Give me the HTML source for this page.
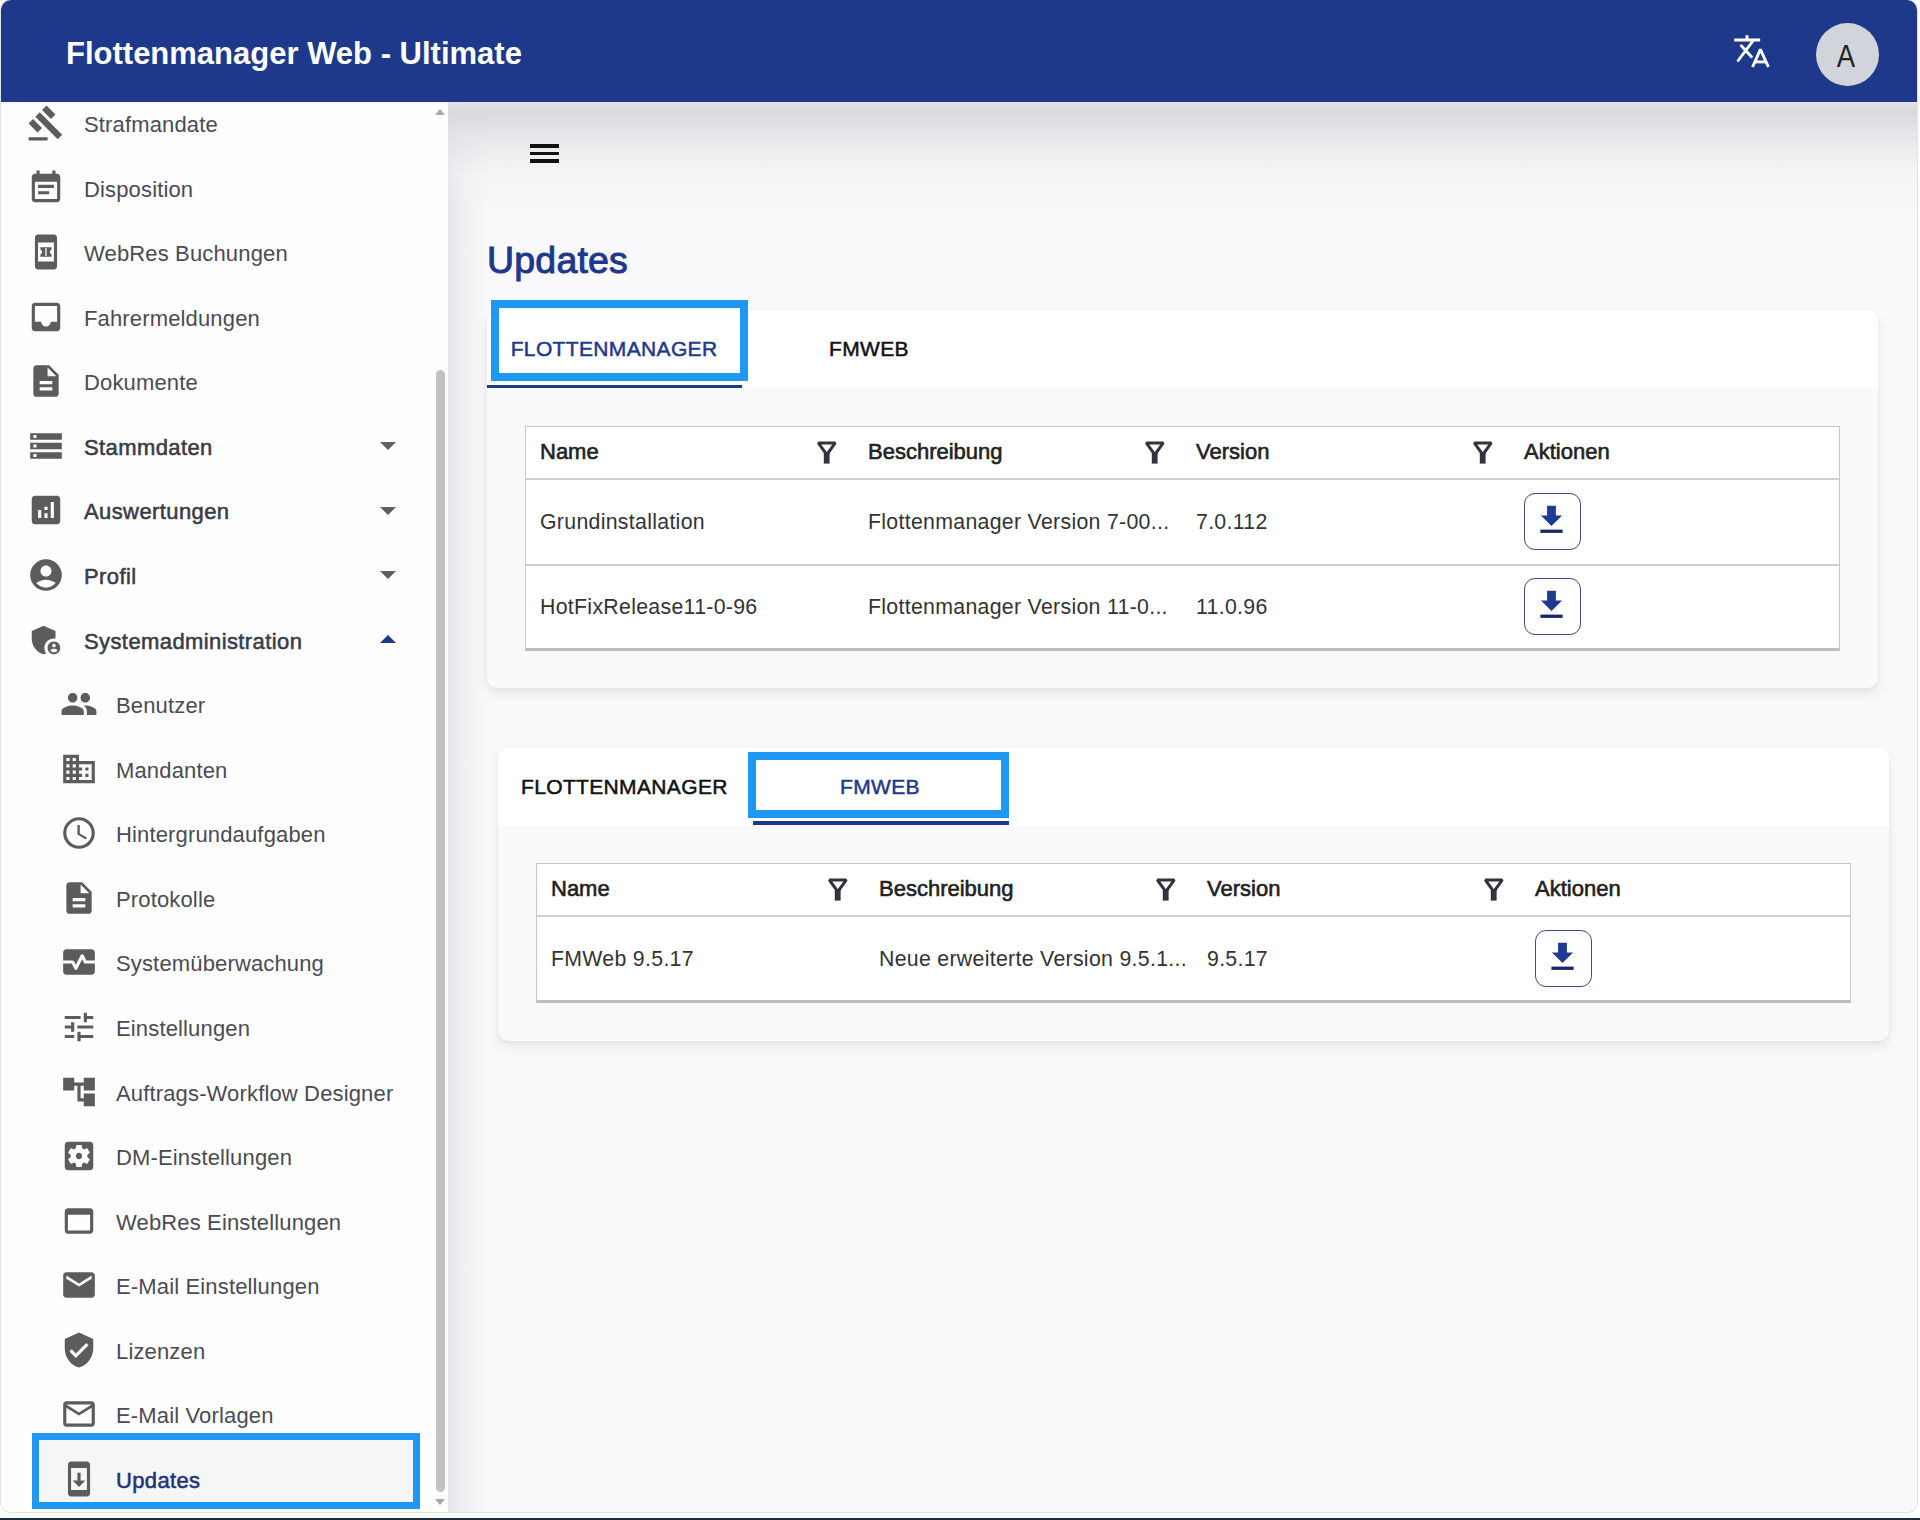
<!DOCTYPE html>
<html><head><meta charset="utf-8">
<style>
*{box-sizing:border-box;margin:0;padding:0}
html,body{width:1920px;height:1520px;overflow:hidden}
body{position:relative;background:#ffffff;font-family:"Liberation Sans",sans-serif}
#bot{position:absolute;left:0;top:1518px;width:1920px;height:2px;background:#1b2c3e}
#win{position:absolute;left:1px;top:0;width:1916px;height:1512px;border-radius:10px;background:#f9f9fb;overflow:hidden;box-shadow:0 0 0 1px #e2e2e2}
#hdr{position:absolute;left:1px;top:0;width:1916px;height:102px;background:#1e398b;border-radius:10px 10px 0 0}
#title{position:absolute;left:65px;top:34px;font-size:31px;font-weight:700;color:#fff;line-height:40px;white-space:nowrap}
#avatar{position:absolute;left:1814.5px;top:22.7px;width:63.5px;height:63.5px;border-radius:50%;background:#d1d4da;color:#222;font-size:32px;text-align:center;line-height:66px;text-indent:-2px}
#avatar span{display:inline-block;transform:scaleX(0.86)}

#side{position:absolute;left:1px;top:102px;width:447px;height:1410px;background:#fefefe;border-bottom-left-radius:10px;overflow:hidden}
#sideinner{position:absolute;left:-1px;top:-102px;width:447px;height:1520px}
.ic{position:absolute;width:38.0px;height:38.0px;fill:#5c5c5c}
.lb{position:absolute;height:40px;line-height:40px;font-size:22px;letter-spacing:0.15px;color:#4b4b53;white-space:nowrap}
.lb.b{color:#3b3b46;letter-spacing:0.4px;-webkit-text-stroke:0.55px currentColor}
.lb.sel{color:#24337c;letter-spacing:0.35px;-webkit-text-stroke:0.55px currentColor}
.caret{position:absolute;left:379.5px;width:0;height:0;border-left:8px solid transparent;border-right:8px solid transparent}
#selbg{position:absolute;left:39px;top:1440px;width:374px;height:62px;background:#f6f6f7}
.hib{position:absolute;border:8px solid #1e98f2}
#sb{position:absolute;left:435.8px;top:370px;width:9.4px;height:1122px;border-radius:5px;background:#c2c2c2}
.sbar{position:absolute;left:435px;width:0;height:0;border-left:5.5px solid transparent;border-right:5.5px solid transparent}
#main{position:absolute;left:448px;top:102px;width:1469px;height:1410px;background:#f9f9fb;overflow:hidden;border-bottom-right-radius:10px}
#mshadow{position:absolute;left:0;top:0;width:100%;height:115px;background:linear-gradient(rgba(226,226,229,0.9) 0px,rgba(216,216,220,0.95) 10px,rgba(226,226,230,0.75) 35px,rgba(240,240,243,0.5) 70px,rgba(249,249,251,0) 115px)}
#lshadow{position:absolute;left:0;top:0;width:40px;height:100%;background:linear-gradient(90deg,#e4e4e7,rgba(236,236,240,0.8) 30%,rgba(249,249,251,0))}
#menu{position:absolute;left:526px;top:135.5px;width:36px;height:36px;fill:#111}
#h1{position:absolute;left:487px;top:237px;font-size:37.5px;line-height:46px;color:#1e398b;white-space:nowrap;-webkit-text-stroke:1px currentColor;letter-spacing:0.2px}
.card{position:absolute;background:#f9f9fb;border-radius:10px;box-shadow:0 6px 12px rgba(0,0,0,0.075),0 1px 4px rgba(0,0,0,0.04);overflow:hidden}
.tabs{position:absolute;left:0;top:0;width:100%;height:78px;background:#ffffff}
.tab{position:absolute;font-size:21px;line-height:30px;top:24px;color:#111;white-space:nowrap;letter-spacing:0.35px;-webkit-text-stroke:0.5px currentColor}
.tab.act{color:#1e398b}
.uline{position:absolute;height:4px;background:#1e398b}
.tbl{position:absolute;background:#fff;border:1.5px solid #c8c8cc;border-bottom:3px solid #bdbdc0}
.th{position:absolute;top:9.5px;font-size:22px;line-height:30px;color:#222;white-space:nowrap;letter-spacing:0px;-webkit-text-stroke:0.6px currentColor}
.td{position:absolute;height:85px;line-height:85px;font-size:21.3px;color:#333;white-space:nowrap;letter-spacing:0.3px}
.hl{position:absolute;left:0;width:100%;height:2px;background:#d0d0d3}
.fnw{position:absolute;top:14px;width:22px;height:23px;margin-left:-1.5px}
.fn{width:22px;height:23px;display:block}
.dl{position:absolute;width:57px;height:57px;border:1.6px solid #3f4a86;border-radius:11px;background:#fff}
.dl svg{position:absolute;left:-1.6px;top:-1.6px;width:57px;height:57px}
</style></head>
<body>
<div id="bot"></div>
<div id="win"></div>
<div id="side"><div id="sideinner">
<div id="selbg"></div>
<svg class="ic" viewBox="0 0 24 24" style="left:27px;top:104.00px"><path d="M1 21h12v2H1zM5.245 8.07l2.83-2.827 14.14 14.142-2.828 2.828zM12.317 1l5.657 5.656-2.83 2.83-5.654-5.66zM3.825 9.485l5.657 5.657-2.828 2.828-5.657-5.657z"/></svg>
<div class="lb " style="left:84px;top:105.00px">Strafmandate</div>
<svg class="ic" viewBox="0 0 24 24" style="left:27px;top:168.57px"><path d="M17 10H7v2h10v-2zm2-7h-1V1h-2v2H8V1H6v2H5c-1.11 0-1.99.9-1.99 2L3 19c0 1.1.89 2 2 2h14c1.1 0 2-.9 2-2V5c0-1.1-.9-2-2-2zm0 16H5V8h14v11zm-5-5H7v2h7v-2z"/></svg>
<div class="lb " style="left:84px;top:169.57px">Disposition</div>
<svg class="ic" viewBox="0 0 24 24" style="left:27px;top:233.14px"><path d="M17 1H7c-1.1 0-2 .9-2 2v18c0 1.1.9 2 2 2h10c1.1 0 2-.9 2-2V3c0-1.1-.9-2-2-2zm0 17H7V6h10v12z"/><path d="M8.5 9h7v1.6c-.7.2-1 .8-1 1.4s.3 1.2 1 1.4V15h-7v-1.6c.7-.2 1-.8 1-1.4s-.3-1.2-1-1.4z"/><path fill="#fff" d="M11.6 9.4h.8v5.2h-.8z"/></svg>
<div class="lb " style="left:84px;top:234.14px">WebRes Buchungen</div>
<svg class="ic" viewBox="0 0 24 24" style="left:27px;top:297.71px"><path d="M19 3H4.99c-1.11 0-1.98.9-1.98 2L3 19c0 1.1.88 2 1.99 2H19c1.1 0 2-.9 2-2V5c0-1.1-.9-2-2-2zm0 12h-4c0 1.66-1.35 3-3 3s-3-1.34-3-3H4.99V5H19v10z"/></svg>
<div class="lb " style="left:84px;top:298.71px">Fahrermeldungen</div>
<svg class="ic" viewBox="0 0 24 24" style="left:27px;top:362.28px"><path d="M14 2H6c-1.1 0-1.99.9-1.99 2L4 20c0 1.1.89 2 1.99 2H18c1.1 0 2-.9 2-2V8l-6-6zm2 16H8v-2h8v2zm0-4H8v-2h8v2zm-3-5V3.5L18.5 9H13z"/></svg>
<div class="lb " style="left:84px;top:363.28px">Dokumente</div>
<svg class="ic" viewBox="0 0 24 24" style="left:27px;top:426.85px"><path d="M2 20h20v-4H2v4zm2-3h2v2H4v-2zM2 4v4h20V4H2zm4 3H4V5h2v2zm-4 7h20v-4H2v4zm2-3h2v2H4v-2z"/></svg>
<div class="lb b" style="left:84px;top:427.85px">Stammdaten</div>
<div class="caret" style="top:442.35px;border-top:8.5px solid #5f5f5f"></div>
<svg class="ic" viewBox="0 0 24 24" style="left:27px;top:491.42px"><path d="M19 3H5c-1.1 0-2 .9-2 2v14c0 1.1.9 2 2 2h14c1.1 0 2-.9 2-2V5c0-1.1-.9-2-2-2zM9 17H7v-5h2v5zm4 0h-2v-3h2v3zm0-5h-2v-2h2v2zm4 5h-2V7h2v10z"/></svg>
<div class="lb b" style="left:84px;top:492.42px">Auswertungen</div>
<div class="caret" style="top:506.92px;border-top:8.5px solid #5f5f5f"></div>
<svg class="ic" viewBox="0 0 24 24" style="left:27px;top:555.99px"><path d="M12 2C6.48 2 2 6.48 2 12s4.48 10 10 10 10-4.48 10-10S17.52 2 12 2zm0 4c1.93 0 3.5 1.57 3.5 3.5S13.93 13 12 13s-3.5-1.57-3.5-3.5S10.07 6 12 6zm0 14c-2.03 0-4.43-.82-6.14-2.88C7.55 15.8 9.68 15 12 15s4.45.8 6.14 2.12C16.43 19.18 14.03 20 12 20z"/></svg>
<div class="lb b" style="left:84px;top:556.99px">Profil</div>
<div class="caret" style="top:571.49px;border-top:8.5px solid #5f5f5f"></div>
<svg class="ic" viewBox="0 0 24 24" style="left:27px;top:620.56px"><path d="M17 11c.34 0 .67.04 1 .09V6.27L10.5 3 3 6.27v4.91c0 4.54 3.2 8.79 7.5 9.82.55-.13 1.08-.32 1.6-.55-.69-.98-1.1-2.17-1.1-3.45 0-3.31 2.69-6 6-6z"/><path d="M17 13c-2.21 0-4 1.79-4 4s1.79 4 4 4 4-1.79 4-4-1.79-4-4-4zm0 1.38c.62 0 1.12.51 1.12 1.12s-.51 1.12-1.12 1.12-1.12-.51-1.12-1.12.5-1.12 1.12-1.12zm0 5.37c-.93 0-1.74-.46-2.24-1.17.05-.72 1.51-1.08 2.24-1.08s2.19.36 2.24 1.08c-.5.71-1.31 1.17-2.24 1.17z"/></svg>
<div class="lb b" style="left:84px;top:621.56px">Systemadministration</div>
<div class="caret" style="top:635.06px;border-bottom:8.5px solid #1e398b"></div>
<svg class="ic" viewBox="0 0 24 24" style="left:59.5px;top:685.13px"><path d="M16 11c1.66 0 2.99-1.34 2.99-3S17.66 5 16 5c-1.66 0-3 1.34-3 3s1.34 3 3 3zm-8 0c1.66 0 2.99-1.34 2.99-3S9.66 5 8 5C6.34 5 5 6.34 5 8s1.34 3 3 3zm0 2c-2.33 0-7 1.17-7 3.5V19h14v-2.5c0-2.33-4.67-3.5-7-3.5zm8 0c-.29 0-.62.02-.97.05 1.16.84 1.97 1.97 1.97 3.45V19h6v-2.5c0-2.33-4.67-3.5-7-3.5z"/></svg>
<div class="lb " style="left:116px;top:686.13px">Benutzer</div>
<svg class="ic" viewBox="0 0 24 24" style="left:59.5px;top:749.70px"><path d="M12 7V3H2v18h20V7H12zM6 19H4v-2h2v2zm0-4H4v-2h2v2zm0-4H4V9h2v2zm0-4H4V5h2v2zm4 12H8v-2h2v2zm0-4H8v-2h2v2zm0-4H8V9h2v2zm0-4H8V5h2v2zm10 12h-8v-2h2v-2h-2v-2h2v-2h-2V9h8v10zm-2-8h-2v2h2v-2zm0 4h-2v2h2v-2z"/></svg>
<div class="lb " style="left:116px;top:750.70px">Mandanten</div>
<svg class="ic" viewBox="0 0 24 24" style="left:59.5px;top:814.27px"><path d="M11.99 2C6.47 2 2 6.48 2 12s4.47 10 9.99 10C17.52 22 22 17.52 22 12S17.52 2 11.99 2zM12 20c-4.42 0-8-3.58-8-8s3.58-8 8-8 8 3.58 8 8-3.58 8-8 8zm.5-13H11v6l5.25 3.15.75-1.23-4.5-2.67z"/></svg>
<div class="lb " style="left:116px;top:815.27px">Hintergrundaufgaben</div>
<svg class="ic" viewBox="0 0 24 24" style="left:59.5px;top:878.84px"><path d="M14 2H6c-1.1 0-1.99.9-1.99 2L4 20c0 1.1.89 2 1.99 2H18c1.1 0 2-.9 2-2V8l-6-6zm2 16H8v-2h8v2zm0-4H8v-2h8v2zm-3-5V3.5L18.5 9H13z"/></svg>
<div class="lb " style="left:116px;top:879.84px">Protokolle</div>
<svg class="ic" viewBox="0 0 24 24" style="left:59.5px;top:943.41px"><path d="M15.11 12.45L14 10.24l-3.11 6.21c-.16.34-.51.55-.89.55s-.73-.21-.89-.55L7.38 13H2v5c0 1.1.9 2 2 2h16c1.1 0 2-.9 2-2v-5h-6c-.38 0-.73-.21-.89-.55z"/><path d="M20 4H4c-1.1 0-2 .9-2 2v5h6c.38 0 .73.21.89.55L10 13.76l3.11-6.21c.34-.68 1.45-.68 1.79 0L16.62 11H22V6c0-1.1-.9-2-2-2z"/></svg>
<div class="lb " style="left:116px;top:944.41px">Systemüberwachung</div>
<svg class="ic" viewBox="0 0 24 24" style="left:59.5px;top:1007.98px"><path d="M3 17v2h6v-2H3zM3 5v2h10V5H3zm10 16v-2h8v-2h-8v-2h-2v6h2zM7 9v2H3v2h4v2h2V9H7zm14 4v-2H11v2h10zm-6-4h2V7h4V5h-4V3h-2v6z"/></svg>
<div class="lb " style="left:116px;top:1008.98px">Einstellungen</div>
<svg class="ic" viewBox="0 0 24 24" style="left:59.5px;top:1072.55px"><path d="M22 11V3h-7v3H9V3H2v8h7V8h2v10h4v3h7v-8h-7v3h-2V8h2v3z"/></svg>
<div class="lb " style="left:116px;top:1073.55px">Auftrags-Workflow Designer</div>
<svg class="ic" viewBox="0 0 24 24" style="left:59.5px;top:1137.12px"><path d="M12 10c-1.1 0-2 .9-2 2s.9 2 2 2 2-.9 2-2-.9-2-2-2zm7-7H5c-1.11 0-2 .9-2 2v14c0 1.1.89 2 2 2h14c1.11 0 2-.9 2-2V5c0-1.1-.89-2-2-2zm-1.75 9c0 .23-.02.46-.05.68l1.48 1.16c.13.11.17.3.08.45l-1.4 2.42c-.09.15-.27.21-.43.15l-1.74-.7c-.36.28-.76.51-1.18.69l-.26 1.85c-.03.17-.18.3-.35.3h-2.8c-.17 0-.32-.13-.35-.29l-.26-1.85c-.43-.18-.82-.41-1.18-.69l-1.74.7c-.16.06-.34 0-.43-.15l-1.4-2.42c-.09-.15-.05-.34.08-.45l1.48-1.16c-.03-.23-.05-.46-.05-.69 0-.23.02-.46.05-.68l-1.48-1.16c-.13-.11-.17-.3-.08-.45l1.4-2.42c.09-.15.27-.21.43-.15l1.74.7c.36-.28.76-.51 1.18-.69l.26-1.85c.03-.17.18-.3.35-.3h2.8c.17 0 .32.13.35.29l.26 1.85c.43.18.82.41 1.18.69l1.74-.7c.16-.06.34 0 .43.15l1.4 2.42c.09.15.05.34-.08.45l-1.48 1.16c.03.23.05.46.05.69z"/></svg>
<div class="lb " style="left:116px;top:1138.12px">DM-Einstellungen</div>
<svg class="ic" viewBox="0 0 24 24" style="left:59.5px;top:1201.69px"><path d="M19 4H5c-1.11 0-2 .9-2 2v12c0 1.1.89 2 2 2h14c1.1 0 2-.9 2-2V6c0-1.1-.89-2-2-2zm0 14H5V8h14v10z"/></svg>
<div class="lb " style="left:116px;top:1202.69px">WebRes Einstellungen</div>
<svg class="ic" viewBox="0 0 24 24" style="left:59.5px;top:1266.26px"><path d="M20 4H4c-1.1 0-1.99.9-1.99 2L2 18c0 1.1.9 2 2 2h16c1.1 0 2-.9 2-2V6c0-1.1-.9-2-2-2zm0 4l-8 5-8-5V6l8 5 8-5v2z"/></svg>
<div class="lb " style="left:116px;top:1267.26px">E-Mail Einstellungen</div>
<svg class="ic" viewBox="0 0 24 24" style="left:59.5px;top:1330.83px"><path d="M12 1L3 5v6c0 5.55 3.84 10.74 9 12 5.16-1.26 9-6.45 9-12V5l-9-4zm-2 16l-4-4 1.41-1.41L10 14.17l6.59-6.59L18 9l-8 8z"/></svg>
<div class="lb " style="left:116px;top:1331.83px">Lizenzen</div>
<svg class="ic" viewBox="0 0 24 24" style="left:59.5px;top:1395.40px"><path d="M20 4H4c-1.1 0-1.99.9-1.99 2L2 18c0 1.1.9 2 2 2h16c1.1 0 2-.9 2-2V6c0-1.1-.9-2-2-2zm0 14H4V8l8 5 8-5v10zm-8-7L4 6h16l-8 5z"/></svg>
<div class="lb " style="left:116px;top:1396.40px">E-Mail Vorlagen</div>
<svg class="ic" viewBox="0 0 24 24" style="left:59.5px;top:1459.97px"><path d="M17 1.01L7 1c-1.1 0-1.99.9-1.99 2v18c0 1.1.89 2 1.99 2h10c1.1 0 2-.9 2-2V3c0-1.1-.9-1.99-2-1.99zM17 19H7V5h10v14zm-1-6h-3V8h-2v5H8l4 4 4-4z"/></svg>
<div class="lb sel" style="left:116px;top:1460.97px">Updates</div>
<div class="hib" style="left:32px;top:1432.5px;width:388px;height:76px;border-width:7.5px"></div>
<div class="sbar" style="top:109px;border-bottom:6px solid #a9a9a9"></div>
<div id="sb"></div>
<div class="sbar" style="top:1499px;border-top:6px solid #a9a9a9"></div>
</div></div>
<div id="main"><div id="lshadow"></div><div id="mshadow"></div></div>
<div id="hdr">
  <div id="title">Flottenmanager Web - Ultimate</div>
  <div id="avatar"><span>A</span></div>
  <svg id="trans" viewBox="0 0 60 55" width="60" height="55" style="position:absolute;left:1720px;top:25px"><g fill="none" stroke="#fff" stroke-width="2.9"><path d="M13.2 15H39.2M26 10.3V15"/><path stroke-linecap="round" d="M32.6 15L17.2 35.5M20.3 20.8L30.4 31.8"/><path stroke-linejoin="bevel" d="M31.6 42L39.4 24.4L47.4 42"/><path d="M34.4 36.9H44.4"/></g></svg>
</div>
<div style="position:absolute;left:530px;top:144.4px;width:29px;height:3.4px;background:#111"></div><div style="position:absolute;left:530px;top:151.5px;width:29px;height:3.4px;background:#111"></div><div style="position:absolute;left:530px;top:159.2px;width:29px;height:3.4px;background:#111"></div>
<div id="h1">Updates</div>
<div class="card" style="left:487px;top:310px;width:1391px;height:378px">
  <div class="tabs"></div>
  <div class="tab act" style="left:23.7px">FLOTTENMANAGER</div>
  <div class="tab" style="left:342px">FMWEB</div>
  <div class="uline" style="left:0px;top:74.8px;width:255px;height:3px"></div>
</div>
<div class="hib" style="left:491px;top:300px;width:256.5px;height:81px"></div>
<div class="tbl" style="left:525px;top:426px;width:1315px;height:224.5px">
<div class="th" style="left:14px">Name</div>
<div class="fnw" style="left:291px"><svg class="fn" viewBox="0 0 22 23"><path d="M2.3 1.9H19.3L10.8 13.6Z" fill="none" stroke="#33333d" stroke-width="3" stroke-linejoin="miter" stroke-miterlimit="2"/><rect x="7.8" y="12" width="5.8" height="10.6" fill="#33333d"/></svg></div>
<div class="th" style="left:342px">Beschreibung</div>
<div class="fnw" style="left:619px"><svg class="fn" viewBox="0 0 22 23"><path d="M2.3 1.9H19.3L10.8 13.6Z" fill="none" stroke="#33333d" stroke-width="3" stroke-linejoin="miter" stroke-miterlimit="2"/><rect x="7.8" y="12" width="5.8" height="10.6" fill="#33333d"/></svg></div>
<div class="th" style="left:670px">Version</div>
<div class="fnw" style="left:947px"><svg class="fn" viewBox="0 0 22 23"><path d="M2.3 1.9H19.3L10.8 13.6Z" fill="none" stroke="#33333d" stroke-width="3" stroke-linejoin="miter" stroke-miterlimit="2"/><rect x="7.8" y="12" width="5.8" height="10.6" fill="#33333d"/></svg></div>
<div class="th" style="left:998px">Aktionen</div>
<div class="hl" style="top:51px"></div>
<div class="td" style="left:14px;top:53px">Grundinstallation</div>
<div class="td" style="left:342px;top:53px">Flottenmanager Version 7-00...</div>
<div class="td" style="left:670px;top:53px">7.0.112</div>
<div class="dl" style="left:998px;top:66px"><svg viewBox="0 0 57 57"><path d="M24.1 13.7h8.8v9.8h6.2L28.5 34 17.9 23.5h6.2z" fill="#1f3a92"/><rect x="17.4" y="37.6" width="22.2" height="3.3" fill="#1b2566"/></svg></div>
<div class="hl" style="top:137px"></div>
<div class="td" style="left:14px;top:138px">HotFixRelease11-0-96</div>
<div class="td" style="left:342px;top:138px">Flottenmanager Version 11-0...</div>
<div class="td" style="left:670px;top:138px">11.0.96</div>
<div class="dl" style="left:998px;top:151px"><svg viewBox="0 0 57 57"><path d="M24.1 13.7h8.8v9.8h6.2L28.5 34 17.9 23.5h6.2z" fill="#1f3a92"/><rect x="17.4" y="37.6" width="22.2" height="3.3" fill="#1b2566"/></svg></div>
</div>
<div class="card" style="left:498px;top:748px;width:1391px;height:293px">
  <div class="tabs"></div>
  <div class="tab" style="left:23px">FLOTTENMANAGER</div>
  <div class="tab act" style="left:342px">FMWEB</div>
  <div class="uline" style="left:255.4px;top:73.3px;width:255.3px;height:3.6px"></div>
</div>
<div class="hib" style="left:748px;top:752px;width:260.5px;height:66px"></div>
<div class="tbl" style="left:536px;top:863px;width:1315px;height:139.5px">
<div class="th" style="left:14px">Name</div>
<div class="fnw" style="left:291px"><svg class="fn" viewBox="0 0 22 23"><path d="M2.3 1.9H19.3L10.8 13.6Z" fill="none" stroke="#33333d" stroke-width="3" stroke-linejoin="miter" stroke-miterlimit="2"/><rect x="7.8" y="12" width="5.8" height="10.6" fill="#33333d"/></svg></div>
<div class="th" style="left:342px">Beschreibung</div>
<div class="fnw" style="left:619px"><svg class="fn" viewBox="0 0 22 23"><path d="M2.3 1.9H19.3L10.8 13.6Z" fill="none" stroke="#33333d" stroke-width="3" stroke-linejoin="miter" stroke-miterlimit="2"/><rect x="7.8" y="12" width="5.8" height="10.6" fill="#33333d"/></svg></div>
<div class="th" style="left:670px">Version</div>
<div class="fnw" style="left:947px"><svg class="fn" viewBox="0 0 22 23"><path d="M2.3 1.9H19.3L10.8 13.6Z" fill="none" stroke="#33333d" stroke-width="3" stroke-linejoin="miter" stroke-miterlimit="2"/><rect x="7.8" y="12" width="5.8" height="10.6" fill="#33333d"/></svg></div>
<div class="th" style="left:998px">Aktionen</div>
<div class="hl" style="top:51px"></div>
<div class="td" style="left:14px;top:53px">FMWeb 9.5.17</div>
<div class="td" style="left:342px;top:53px">Neue erweiterte Version 9.5.1...</div>
<div class="td" style="left:670px;top:53px">9.5.17</div>
<div class="dl" style="left:998px;top:66px"><svg viewBox="0 0 57 57"><path d="M24.1 13.7h8.8v9.8h6.2L28.5 34 17.9 23.5h6.2z" fill="#1f3a92"/><rect x="17.4" y="37.6" width="22.2" height="3.3" fill="#1b2566"/></svg></div>
</div>
</body></html>
